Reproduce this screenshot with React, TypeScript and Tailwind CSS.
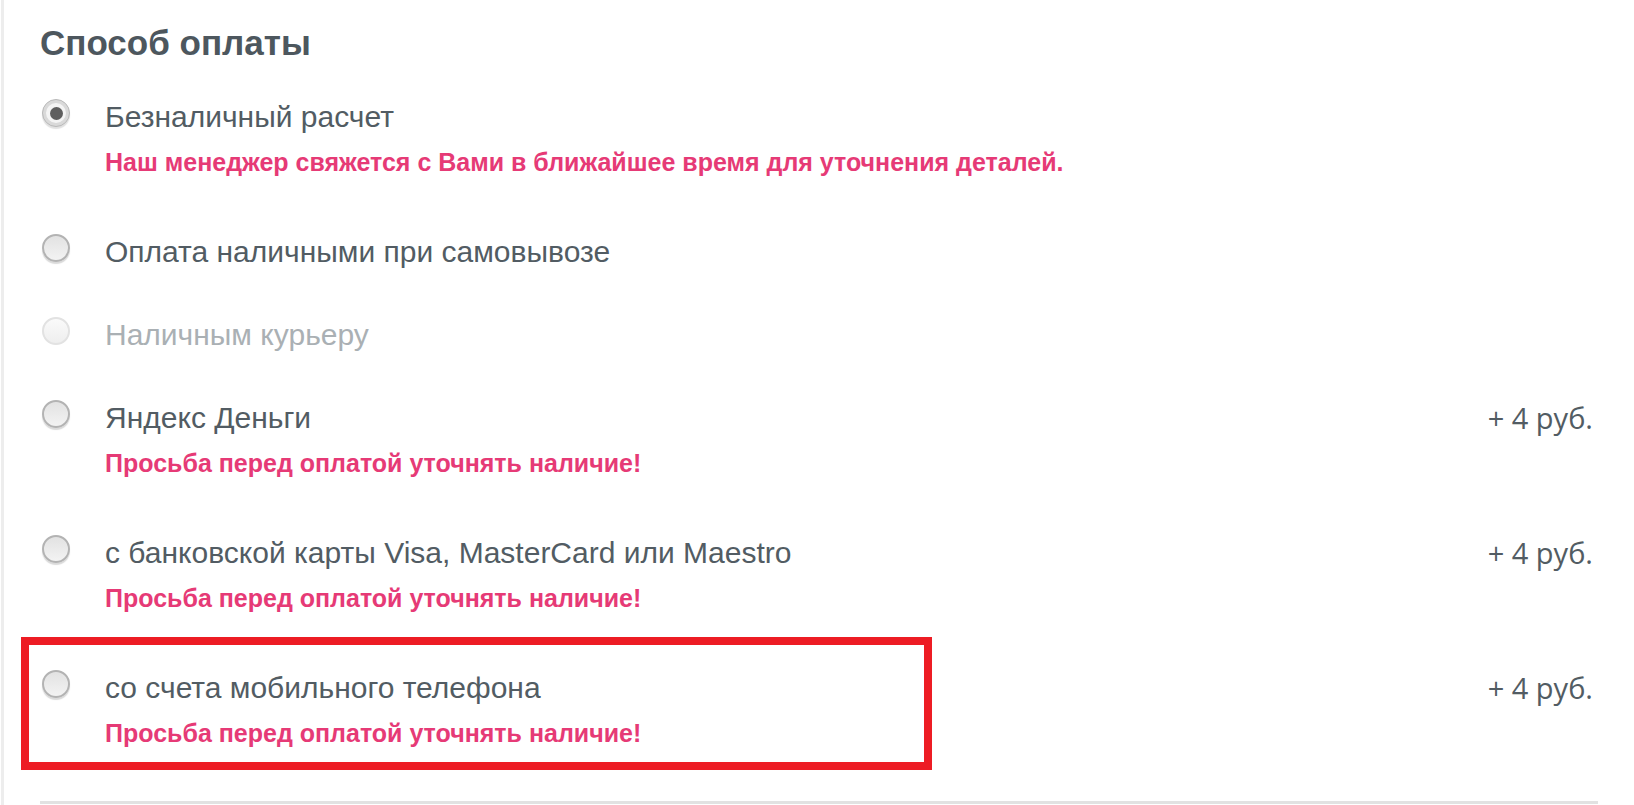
import React from 'react'

type Method = {
  id: string
  label: string
  note?: string
  price?: string
  checked?: boolean
  disabled?: boolean
  highlight?: boolean
}

const methods: Method[] = [
  { id: 'cashless', label: 'Безналичный расчет', note: 'Наш менеджер свяжется с Вами в ближайшее время для уточнения деталей.', checked: true },
  { id: 'pickup', label: 'Оплата наличными при самовывозе' },
  { id: 'courier', label: 'Наличным курьеру', disabled: true },
  { id: 'yandex', label: 'Яндекс Деньги', note: 'Просьба перед оплатой уточнять наличие!', price: '+ 4 руб.' },
  { id: 'card', label: 'с банковской карты Visa, MasterCard или Maestro', note: 'Просьба перед оплатой уточнять наличие!', price: '+ 4 руб.' },
  { id: 'mobile', label: 'со счета мобильного телефона', note: 'Просьба перед оплатой уточнять наличие!', price: '+ 4 руб.', highlight: true },
]

function Radio({ checked, disabled }: { checked?: boolean; disabled?: boolean }) {
  if (checked) {
    return (
      <span className="ml-[2px] flex h-[28px] w-[28px] shrink-0 items-center justify-center rounded-full border border-[#b9b9b9] bg-[#d9d9d9] shadow-[0_2px_1px_rgba(0,0,0,0.12)]">
        <span className="flex h-[20px] w-[20px] items-center justify-center rounded-full bg-[#f4f4f4]">
          <span className="h-[13px] w-[13px] rounded-full bg-[#5e5e5e]" />
        </span>
      </span>
    )
  }
  if (disabled) {
    return (
      <span className="ml-[2px] h-[28px] w-[28px] shrink-0 rounded-full border-2 border-[#e2e2e2] bg-linear-to-b from-[#fafafa] to-[#eeeeee]" />
    )
  }
  return (
    <span className="ml-[2px] h-[28px] w-[28px] shrink-0 rounded-full border-2 border-[#b3b3b3] bg-linear-to-b from-[#e2e2e2] to-[#f3f3f3] shadow-[0_2px_1px_rgba(0,0,0,0.15)]" />
  )
}

function Row({ m }: { m: Method }) {
  return (
    <div className="relative pt-[24px] pb-[23px]">
      <div className="flex items-start">
        <Radio checked={m.checked} disabled={m.disabled} />
        <div className="ml-[35px] flex-1">
          <div className={`text-[30px] leading-[36px] ${m.disabled ? 'text-[#aab0b4]' : 'text-[#525c63]'}`}>{m.label}</div>
          {m.note && (
            <div className="mt-[12px] mb-[10px] text-[25px] font-bold leading-[30px] text-[#e63a76]">{m.note}</div>
          )}
        </div>
        {m.price && (
          <div className="pr-[5px] font-['Open_Sans',sans-serif] text-[29px] leading-[36px] text-[#525c63]">{m.price}</div>
        )}
      </div>
      {m.highlight && (
        <div className="pointer-events-none absolute left-[-19px] top-[-9px] h-[133px] w-[911px] border-[8px] border-[#ed1c24]" />
      )}
    </div>
  )
}

export default function App() {
  return (
    <div className="h-[805px] w-full overflow-hidden bg-white font-['Liberation_Sans',Arial,sans-serif]">
      <div className="ml-[1px] h-full border-l-[3px] border-[#ededed] pl-[36px] pr-[36px] pt-[26px]">
        <h2 className="mb-[15px] text-[35px] font-bold leading-[34px] text-[#4d575e]">Способ оплаты</h2>
        <div>
          {methods.map(m => <Row key={m.id} m={m} />)}
        </div>
        <div className="mt-[20px] border-t-[3px] border-[#e2e2e2]" />
      </div>
    </div>
  )
}
